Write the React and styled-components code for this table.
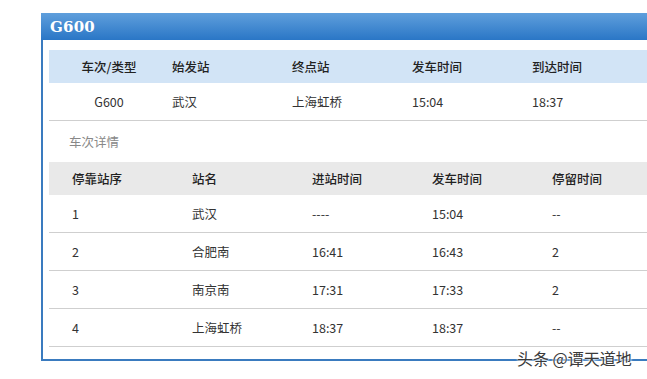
import React from "react";
import styled, { createGlobalStyle } from "styled-components";

const Global = createGlobalStyle`
  html, body { margin: 0; padding: 0; background: #fff; overflow: hidden; }
  body { font-family: "Noto Sans CJK SC", "Microsoft YaHei", sans-serif; }
`;

const Page = styled.div`
  position: relative;
  height: 379px;
  padding: 13px 0 0 41px;
  box-sizing: border-box;
  overflow: hidden;
  background: #fff;
`;

const Panel = styled.div`
  width: calc(100% + 60px);
  border: 2px solid #3a7bbf;
  border-top: none;
  border-right: none;
  box-sizing: border-box;
  padding-bottom: 12px;
  background: #fff;
`;

const Header = styled.div`
  height: 27px;
  margin-left: -2px;
  padding-left: 9px;
  display: flex;
  align-items: center;
  background: linear-gradient(#5f9fdc, #2a76c6);
  color: #fff;
  font-family: "DejaVu Serif", serif;
  font-weight: bold;
  font-size: 15px;
  letter-spacing: 0.2px;
`;

const Body = styled.div`
  padding: 10px 0 0 6px;
`;

const Row = styled.div`
  display: grid;
  grid-template-columns: repeat(5, 120px) 1fr;
  height: ${(p) => p.$h}px;
  align-items: center;
  background: ${(p) => p.$bg || "transparent"};
  border-bottom: ${(p) => (p.$line ? "1px solid #cfcfcf" : "none")};
  box-sizing: border-box;
  font-size: 12.5px;
  color: ${(p) => (p.$head ? "#222" : "#333")};
  font-weight: ${(p) => (p.$head ? 500 : 400)};
`;

const Cell = styled.div`
  padding-left: ${(p) => p.$pl}px;
  text-align: ${(p) => (p.$center ? "center" : "left")};
  white-space: nowrap;
`;

const SectionTitle = styled.div`
  height: 41px;
  display: flex;
  align-items: center;
  padding-left: 20px;
  font-size: 12.5px;
  color: #888;
`;

const Watermark = styled.div`
  position: absolute;
  left: 517px;
  top: 346px;
  font-size: 16px;
  color: #3a3a3a;
  text-shadow: 0 0 2px #fff, 0 0 2px #fff, 0 0 3px #fff;
  white-space: nowrap;
`;

const trainHead = ["车次/类型", "始发站", "终点站", "发车时间", "到达时间"];
const trainRow = ["G600", "武汉", "上海虹桥", "15:04", "18:37"];
const stopHead = ["停靠站序", "站名", "进站时间", "发车时间", "停留时间"];
const stops = [
  ["1", "武汉", "----", "15:04", "--"],
  ["2", "合肥南", "16:41", "16:43", "2"],
  ["3", "南京南", "17:31", "17:33", "2"],
  ["4", "上海虹桥", "18:37", "18:37", "--"],
];

export default function App() {
  return (
    <>
      <Global />
      <Page>
        <Panel>
          <Header>G600</Header>
          <Body>
            <Row $h={33} $bg="#d2e4f6" $head>
              {trainHead.map((t, i) => (
                <Cell key={i} $pl={i === 0 ? 0 : 3} $center={i === 0}>
                  {t}
                </Cell>
              ))}
            </Row>
            <Row $h={38} $line>
              {trainRow.map((t, i) => (
                <Cell key={i} $pl={i === 0 ? 0 : 3} $center={i === 0}>
                  {t}
                </Cell>
              ))}
            </Row>
            <SectionTitle>车次详情</SectionTitle>
            <Row $h={33} $bg="#e9e9e9" $head>
              {stopHead.map((t, i) => (
                <Cell key={i} $pl={23}>
                  {t}
                </Cell>
              ))}
            </Row>
            {stops.map((r, j) => (
              <Row key={j} $h={38} $line>
                {r.map((t, i) => (
                  <Cell key={i} $pl={23}>
                    {t}
                  </Cell>
                ))}
              </Row>
            ))}
          </Body>
        </Panel>
        <Watermark>头条 @谭天道地</Watermark>
      </Page>
    </>
  );
}
